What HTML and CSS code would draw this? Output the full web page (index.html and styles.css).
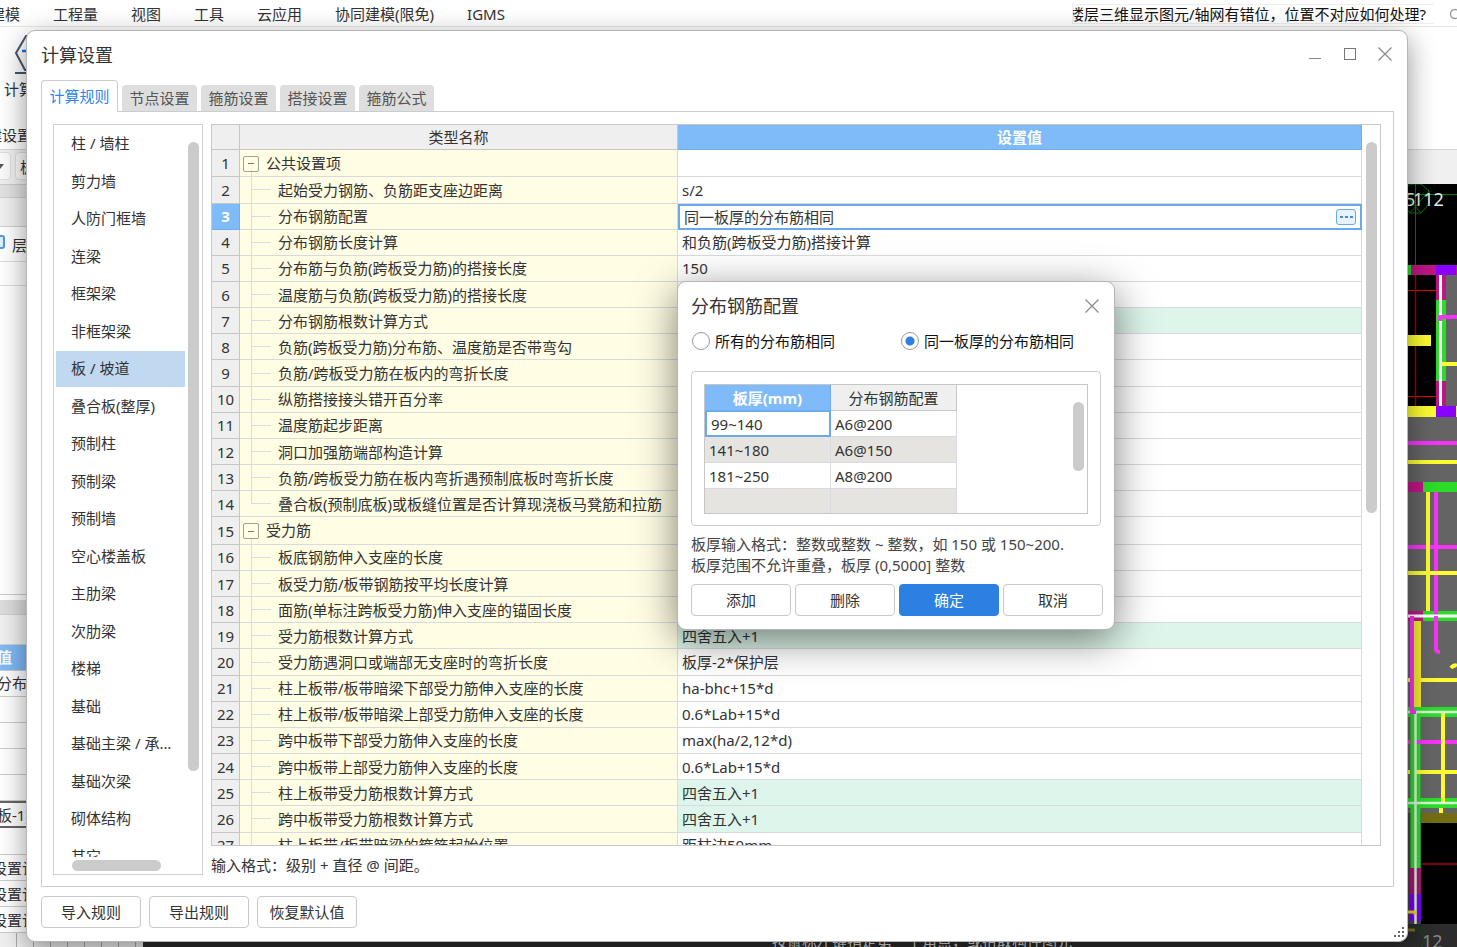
FILE: index.html
```html
<!DOCTYPE html>
<html lang="zh-CN">
<head>
<meta charset="utf-8">
<title>计算设置</title>
<link rel="stylesheet" href="styles.css">
</head>
<body>
<div class="app">
  <header class="menubar">
    <nav class="menu">
      <a href="#">建模</a><a href="#">工程量</a><a href="#">视图</a><a href="#">工具</a><a href="#">云应用</a><a href="#">协同建模(限免)</a><a href="#">IGMS</a>
    </nav>
    <input class="search" type="text" aria-label="搜索" value="楼层三维显示图元/轴网有错位，位置不对应如何处理?">
    <svg class="lens" width="14" height="14" viewBox="0 0 14 14"><circle cx="6" cy="6" r="4.5" fill="none" stroke="#999" stroke-width="1.4"/><path d="M9.5 9.5L13 13" stroke="#999" stroke-width="1.4"/></svg>
  </header>
  <div class="ribbon">
    <svg width="28" height="42" viewBox="0 0 28 42" fill="none"><path d="M26 1H12L2 18l9 17h15" stroke="#4b5568" stroke-width="2"/><path d="M8 16h18" stroke="#1677e8" stroke-width="2.5"/><path d="M1 38h26" stroke="#4b5568" stroke-width="2"/></svg>
    <span class="ribbon-label">计算设置</span>
    <span class="ribbon-group">建设置</span>
  </div>
  <div class="options"><span class="combo combo-arrow"></span><span class="combo">板</span></div>
  <div class="work">
    <aside class="pane">
      <div class="bar bar-dark"></div>
      <div class="bar bar-light"></div>
      <div class="layer"><i></i>层</div>
      <div class="spacer"></div>
      <div class="blank"></div>
      <div class="bar bar-split"></div>
      <div class="bar bar-head"></div>
      <div class="prop prop-head">值</div>
      <div class="prop">分布筋</div><div class="prop"></div><div class="prop"></div><div class="prop"></div><div class="prop"></div>
      <div class="prop prop-name">板-1]</div>
      <div class="prop prop-gap"></div>
      <div class="prop prop-cut">设置计</div><div class="prop prop-cut">设置计</div><div class="prop prop-cut">设置计</div>
      <div class="ticks"></div>
    </aside>
    <div class="canvas">
      <div class="status"><span>按鼠标左键指定第一个角点，或拾取构件图元</span></div>
      <svg class="cad" width="49" height="763" viewBox="0 0 49 763" fill="none">
        <rect width="49" height="763" fill="#000"/>
        <g fill="#646464"><rect x="38" y="91" width="11" height="131"/><rect y="233" width="49" height="396"/></g>
        <rect x="0" y="629" width="13" height="111" fill="#444"/>
        <g stroke="#087a08"><path d="M7.500 0V82M0 10.500H49"/><path d="M2 0L-6 7v13l8 9h11l8-9V7L13 0z"/><path d="M-6 7L13 29M21 7L2 29"/></g>
        <text x="-3" y="22" class="axis">5</text><text x="5" y="22" class="axis">112</text>
        <path d="M0 106.500H28M0 212.500H28" stroke="#f00000"/><path d="M7.500 91V222" stroke="#a00000" stroke-width="1.500"/>
        <g fill="#bd1684"><rect x="3" y="81" width="25" height="10"/><rect x="48" y="81" width="1" height="10"/><rect x="28" y="91" width="10" height="132"/><rect y="298" width="15" height="10"/><rect y="427" width="15" height="10"/></g>
        <g fill="#8a00ff"><rect x="28" y="81" width="20" height="10"/><rect x="28" y="222" width="20" height="11"/></g>
        <g fill="#2bdc28"><rect y="81" width="3" height="10"/><rect x="28" y="116" width="10" height="81"/><rect x="15" y="298" width="34" height="10"/><rect x="15" y="427" width="34" height="10"/></g>
        <g fill="#fbfb30"><rect y="151" width="23" height="11"/><rect y="222" width="28" height="11"/><rect x="48" y="222" width="1" height="11"/></g>
        <path d="M32.500 91V222" stroke="#fff" stroke-width="3"/>
        <path d="M32 137v-4H49M0 259H49M0 363H49M28 308V465q0 3 4 3" stroke="#f832f8" stroke-width="4"/>
        <path d="M33 180H49M0 278H49M0 389H49M20 308V427M0 496H49M43 484q3-4 6-2" stroke="#fbfb30" stroke-width="4"/>
        <path d="M0 432H49" stroke="#fff" stroke-width="3"/>
        <path d="M28 432V465" stroke="#f832f8" stroke-width="4"/>
        <rect x="5" y="437" width="8" height="86" fill="#f0e832"/>
        <path d="M0 528H49M7.500 523V684M0 619H49" stroke="#2bdc28" stroke-width="10"/>
        <path d="M0 558H2M8 560v-2H49" stroke="#f832f8" stroke-width="4"/>
        <path d="M0 588H2M8 588H49M35 528V618M33 624V629" stroke="#fbfb30" stroke-width="4"/>
        <rect x="13" y="629" width="36" height="10" fill="#736e14"/>
        <path d="M13 680H49" stroke="#800000" stroke-width="2"/>
        <rect x="2" y="684" width="11" height="26" fill="#a81678"/><rect x="2" y="710" width="11" height="27" fill="#7a00f0"/>
        <path d="M0 528H49M7.500 528V740M0 619H49" stroke="#d8f5d8" stroke-width="2.500"/>
        <path d="M4 432V528h4" stroke="#f832f8" stroke-width="4"/>
        <path d="M0 728h7v3" stroke="#e8d820" stroke-width="3"/>
        <rect y="740" width="49" height="23" fill="#2c2c2c"/>
        <path d="M8 745l6 3 4 8-5 7" stroke="#0b520b"/><path d="M0 746h7" stroke="#77702a" stroke-width="3"/>
        <text x="14" y="764" class="axis axis-dim">12</text>
      </svg>
    </div>
  </div>
</div>

<section class="window settings" role="dialog" aria-labelledby="settings-title">
  <header class="titlebar">
    <h1 id="settings-title">计算设置</h1>
    <div class="window-buttons">
      <button type="button" aria-label="最小化"><svg width="16" height="16" viewBox="0 0 16 16"><path d="M2 12.500H14" stroke="#888"/></svg></button>
      <button type="button" aria-label="最大化"><svg width="16" height="16" viewBox="0 0 16 16"><rect x="2.500" y="2.500" width="11" height="11" fill="none" stroke="#777"/></svg></button>
      <button type="button" aria-label="关闭"><svg width="16" height="16" viewBox="0 0 16 16"><path d="M1.500 1.500l13 13M14.500 1.500l-13 13" stroke="#888" stroke-width="1.200"/></svg></button>
    </div>
  </header>
  <div class="tabs" role="tablist">
    <button type="button" role="tab" class="tab active" aria-selected="true">计算规则</button>
    <button type="button" role="tab" class="tab">节点设置</button>
    <button type="button" role="tab" class="tab">箍筋设置</button>
    <button type="button" role="tab" class="tab">搭接设置</button>
    <button type="button" role="tab" class="tab">箍筋公式</button>
  </div>
  <div class="panel">
    <nav class="sidebar">
      <div class="list-view">
        <ul class="list">
          <li><a href="#">柱 / 墙柱</a></li><li><a href="#">剪力墙</a></li><li><a href="#">人防门框墙</a></li><li><a href="#">连梁</a></li><li><a href="#">框架梁</a></li><li><a href="#">非框架梁</a></li><li><a href="#" class="selected">板 / 坡道</a></li><li><a href="#">叠合板(整厚)</a></li><li><a href="#">预制柱</a></li><li><a href="#">预制梁</a></li><li><a href="#">预制墙</a></li><li><a href="#">空心楼盖板</a></li><li><a href="#">主肋梁</a></li><li><a href="#">次肋梁</a></li><li><a href="#">楼梯</a></li><li><a href="#">基础</a></li><li><a href="#">基础主梁 / 承台梁</a></li><li><a href="#">基础次梁</a></li><li><a href="#">砌体结构</a></li><li><a href="#">其它</a></li>
        </ul>
      </div>
      <div class="vbar"><i></i></div>
      <div class="hbar"><i></i></div>
    </nav>
    <main class="content">
      <div class="grid-view">
        <table class="rules">
          <colgroup><col class="col-no"><col class="col-name"><col></colgroup>
          <thead><tr><th></th><th>类型名称</th><th class="current">设置值</th></tr></thead>
          <tbody>
            <tr class="group"><th>1</th><td><button type="button" class="fold" aria-label="折叠"></button>公共设置项</td><td></td></tr>
            <tr><th>2</th><td>起始受力钢筋、负筋距支座边距离</td><td>s/2</td></tr>
            <tr class="editing"><th>3</th><td>分布钢筋配置</td><td><div class="editor"><span>同一板厚的分布筋相同</span><button type="button" class="more" aria-label="更多"><i></i><i></i><i></i></button></div></td></tr>
            <tr><th>4</th><td>分布钢筋长度计算</td><td>和负筋(跨板受力筋)搭接计算</td></tr>
            <tr><th>5</th><td>分布筋与负筋(跨板受力筋)的搭接长度</td><td>150</td></tr>
            <tr><th>6</th><td>温度筋与负筋(跨板受力筋)的搭接长度</td><td></td></tr>
            <tr class="mint"><th>7</th><td>分布钢筋根数计算方式</td><td></td></tr>
            <tr><th>8</th><td>负筋(跨板受力筋)分布筋、温度筋是否带弯勾</td><td></td></tr>
            <tr><th>9</th><td>负筋/跨板受力筋在板内的弯折长度</td><td></td></tr>
            <tr><th>10</th><td>纵筋搭接接头错开百分率</td><td></td></tr>
            <tr><th>11</th><td>温度筋起步距离</td><td></td></tr>
            <tr><th>12</th><td>洞口加强筋端部构造计算</td><td></td></tr>
            <tr><th>13</th><td>负筋/跨板受力筋在板内弯折遇预制底板时弯折长度</td><td></td></tr>
            <tr class="last"><th>14</th><td>叠合板(预制底板)或板缝位置是否计算现浇板马凳筋和拉筋</td><td></td></tr>
            <tr class="group"><th>15</th><td><button type="button" class="fold" aria-label="折叠"></button>受力筋</td><td></td></tr>
            <tr><th>16</th><td>板底钢筋伸入支座的长度</td><td></td></tr>
            <tr><th>17</th><td>板受力筋/板带钢筋按平均长度计算</td><td></td></tr>
            <tr><th>18</th><td>面筋(单标注跨板受力筋)伸入支座的锚固长度</td><td></td></tr>
            <tr class="mint"><th>19</th><td>受力筋根数计算方式</td><td>四舍五入+1</td></tr>
            <tr><th>20</th><td>受力筋遇洞口或端部无支座时的弯折长度</td><td>板厚-2*保护层</td></tr>
            <tr><th>21</th><td>柱上板带/板带暗梁下部受力筋伸入支座的长度</td><td>ha-bhc+15*d</td></tr>
            <tr><th>22</th><td>柱上板带/板带暗梁上部受力筋伸入支座的长度</td><td>0.6*Lab+15*d</td></tr>
            <tr><th>23</th><td>跨中板带下部受力筋伸入支座的长度</td><td>max(ha/2,12*d)</td></tr>
            <tr><th>24</th><td>跨中板带上部受力筋伸入支座的长度</td><td>0.6*Lab+15*d</td></tr>
            <tr class="mint"><th>25</th><td>柱上板带受力筋根数计算方式</td><td>四舍五入+1</td></tr>
            <tr class="mint"><th>26</th><td>跨中板带受力筋根数计算方式</td><td>四舍五入+1</td></tr>
            <tr><th>27</th><td>柱上板带/板带暗梁的箍筋起始位置</td><td>距柱边50mm</td></tr>
          </tbody>
        </table>
        <div class="vbar"><i></i></div>
      </div>
      <p class="hint">输入格式：级别 + 直径 @ 间距。</p>
    </main>
  </div>
  <footer class="actions">
    <button type="button" class="btn">导入规则</button>
    <button type="button" class="btn">导出规则</button>
    <button type="button" class="btn">恢复默认值</button>
  </footer>
  <svg class="grip" width="12" height="12" viewBox="0 0 12 12" fill="#666"><path d="M9 0h2v2H9zM5 4h2v2H5zM9 4h2v2H9zM1 8h2v2H1zM5 8h2v2H5zM9 8h2v2H9z"/></svg>
</section>

<section class="window config" role="dialog" aria-labelledby="config-title">
  <header class="config-head">
    <h2 id="config-title">分布钢筋配置</h2>
    <button type="button" aria-label="关闭"><svg width="16" height="16" viewBox="0 0 16 16"><path d="M1.500 1.500l13 13M14.500 1.500l-13 13" stroke="#888" stroke-width="1.200"/></svg></button>
  </header>
  <div class="radios">
    <label><input type="radio" name="scope">所有的分布筋相同</label>
    <label><input type="radio" name="scope" checked>同一板厚的分布筋相同</label>
  </div>
  <div class="frame">
    <div class="thick-view">
      <table class="thick">
        <thead><tr><th class="current">板厚(mm)</th><th>分布钢筋配置</th></tr></thead>
        <tbody>
          <tr><td class="focus">99~140</td><td>A6@200</td></tr>
          <tr><td>141~180</td><td>A6@150</td></tr>
          <tr><td>181~250</td><td>A8@200</td></tr>
          <tr><td></td><td></td></tr>
        </tbody>
      </table>
      <div class="vbar"><i></i></div>
    </div>
  </div>
  <p class="note">板厚输入格式：整数或整数 ~ 整数，如 150 或 150~200.<br>板厚范围不允许重叠，板厚 (0,5000] 整数</p>
  <div class="config-actions">
    <button type="button" class="btn">添加</button>
    <button type="button" class="btn">删除</button>
    <button type="button" class="btn primary">确定</button>
    <button type="button" class="btn">取消</button>
  </div>
</section>
</body>
</html>
```
FILE: styles.css
```css
* { box-sizing: border-box; }
html, body { height: 100%; }
body {
  margin: 0;
  overflow: hidden;
  font: 15px/20px "Noto Sans", "Noto Sans CJK SC", sans-serif;
  color: #333;
  background: #fff;
}
button, input { font: inherit; color: inherit; }
button { padding: 0; border: 0; background: none; }
a { color: inherit; text-decoration: none; }
h1, h2, p, ul { margin: 0; padding: 0; font-weight: 400; }
ul { list-style: none; }
svg { display: block; }

/* Application behind the dialogs */
.app { height: 100%; display: flex; flex-direction: column; overflow: hidden; }
.menubar {
  height: 27px; flex: none;
  display: flex; align-items: center; justify-content: space-between;
  border-bottom: 1px solid #e8e8e8;
  padding-bottom: 2px;
}
.menu { flex: 1; display: flex; gap: 33px; margin-left: -10px; padding-top: 4px; white-space: nowrap; }
.search {
  width: 362px; height: 20px; padding: 0; text-indent: -4px;
  border: 1px solid #eee; border-right: 0; background: #fff; color: #111;
  margin-top: 3px;
}
.lens { margin: 5px -6px 0 15px; }
.ribbon { height: 123px; flex: none; display: flex; flex-direction: column; padding: 8px 0 0 14px; border-bottom: 1px solid #d5d5d5; white-space: nowrap; }
.ribbon-label { margin: 2px 0 0 -10px; }
.ribbon-group { margin: 26px 0 0 -27px; }
.options { height: 34px; flex: none; display: flex; gap: 4px; padding: 2px 0 4px; background: #f0f0f0; margin-left: -20px; }
.combo { width: 31px; border: 1px solid #ddd; border-radius: 4px; background: #fafafa; padding: 4px; overflow: hidden; }
.combo-arrow { display: flex; justify-content: flex-end; align-items: center; }
.combo-arrow::after { content: ""; border: 4px solid transparent; border-top: 5px solid #555; border-bottom: 0; margin-right: 2px; }
.work { flex: 1; min-height: 0; display: flex; }
.pane { width: 143px; flex: none; display: flex; flex-direction: column; overflow: hidden; background: #fff; border-top: 1px solid #ccc; white-space: nowrap; }
.bar { flex: none; border-bottom: 1px solid #d0d0d0; }
.bar-dark { height: 13px; background: #e2e2e2; }
.bar-light { height: 29px; background: #f0f0f0; }
.layer { height: 35px; flex: none; display: flex; align-items: center; gap: 7px; border-bottom: 1px solid #ddd; padding-top: 2px; }
.layer i { width: 12px; height: 14px; margin: 0 0 6px -7px; border: 2px solid #4f98ec; border-radius: 3px; background: #e0eefe; }
.spacer { height: 24px; flex: none; border-bottom: 1px solid #ddd; }
.blank { flex: 1; border-bottom: 1px solid #ccc; }
.bar-split { height: 15px; background: #ddd; margin-top: 5px; }
.bar-head { height: 30px; background: #f0f0f0; }
.prop { height: 26px; flex: none; border-bottom: 1px solid #ccc; line-height: 24px; margin-left: -4px; padding-left: 1px; }
.prop-head { background: #7fbaf9; color: #fff; font-weight: 700; }
.prop-name { height: 27px; border-top: 2px solid #666; border-bottom: 2px solid #666; }
.prop-gap { height: 27px; }
.prop-cut { margin-left: -9px; line-height: 26px; }
.ticks { height: 14px; flex: none; background: repeating-linear-gradient(90deg, #f0f0f0 0 16px, #aaa 16px 17px); }
.canvas { flex: 1; position: relative; background: #000; display: flex; justify-content: space-between; align-items: flex-end; }
.status { flex: 1; height: 23px; background: #2c2c2c; padding-left: 629px; line-height: 34px; color: #ddd; white-space: nowrap; overflow: hidden; }
.cad { flex: none; align-self: flex-start; }
.axis { font: 18px "Noto Sans", sans-serif; fill: #e8e8e8; }
.axis-dim { fill: #888; }

/* Windows */
.window { position: absolute; background: #fff; border: 1px solid #b5b5b5; border-radius: 9px; }
.settings {
  top: 30px; right: 49px; bottom: 5px; left: 26px;
  display: flex; flex-direction: column;
  padding: 0 13px 13px 14px;
  box-shadow: 0 8px 28px rgba(0, 0, 0, .42);
}
.titlebar { height: 49px; flex: none; display: flex; align-items: center; justify-content: space-between; padding: 0 1px 2px 0; }
h1, h2 { font-size: 18px; line-height: 24px; }
.window-buttons { display: flex; gap: 19px; padding-bottom: 2px; }
.window-buttons button { width: 16px; height: 16px; }
.tabs { position: relative; height: 32px; flex: none; display: flex; align-items: flex-end; gap: 4px; margin-bottom: -1px; }
.tab { width: 75px; height: 26px; margin-bottom: 1px; border-radius: 4px 4px 0 0; background: #dedede; color: #555; }
.tab.active { width: 77px; height: 32px; margin: 0; padding-bottom: 1px; background: #fff; border: 1px solid #c9cdd2; border-bottom: 0; color: #2f86e8; }
.panel { flex: 1; min-height: 0; display: flex; gap: 8px; padding: 12px 12px 11px 11px; border: 1px solid #c9cdd2; }
.sidebar {
  width: 150px; flex: none; display: grid;
  grid-template-columns: 1fr 17px; grid-template-rows: minmax(0, 1fr) 17px;
  border: 1px solid #d0d0d0; padding-left: 2px;
}
.list-view { overflow: hidden; }
.list { height: 750px; display: grid; grid-auto-rows: 1fr; }
.list li { display: flex; padding: 1px 0; min-width: 0; }
.list a { flex: 1; min-width: 0; line-height: 35px; padding: 0 6px 0 15px; white-space: nowrap; overflow: hidden; text-overflow: ellipsis; }
.list .selected { background: #c1d8f1; }
.vbar i, .hbar i { display: block; background: #cbcbcb; border-radius: 6px; }
.vbar i { width: 11px; margin: 17px auto 0; }
.sidebar .vbar i { height: 629px; }
.hbar i { width: 89px; height: 11px; margin: 3px 0 0 16px; }

.content { flex: 1; min-width: 0; display: flex; flex-direction: column; }
.grid-view { flex: 1; min-height: 0; display: flex; overflow: hidden; border: 1px solid #c8c8c8; }
.grid-view .vbar { width: 18px; flex: none; }
.grid-view .vbar i { height: 371px; }
.rules { flex: 1; height: 734px; table-layout: fixed; border-collapse: separate; border-spacing: 0; }
.col-no { width: 28px; }
.col-name { width: 438px; }
th, td { padding: 0; border-right: 1px solid #d8dade; border-bottom: 1px solid #d8dade; white-space: nowrap; overflow: hidden; line-height: 20px; }
th { font-weight: 400; background: #efefef; border-color: #c6c6c6; text-align: center; }
th.current, .editing th { background: #7fbaf9; border-color: #6eaeef; color: #fff; font-weight: 700; }
.rules thead tr { height: 25px; }
.rules td { padding-left: 4px; }
.rules td:nth-child(2) {
  padding-left: 38px;
  background:
    linear-gradient(#dcdde2, #dcdde2) 11px 50% / 20px 1px no-repeat,
    linear-gradient(#dcdde2, #dcdde2) 11px 0 / 1px 100% no-repeat,
    #fffde3;
}
.rules .last td:nth-child(2) { background-size: 20px 1px, 1px 50%; }
.rules .group td:nth-child(2) {
  padding-left: 3px;
  background: linear-gradient(#dcdde2, #dcdde2) 11px 100% / 1px 6px no-repeat, #fffde3;
}
.fold { width: 16px; height: 16px; margin: 0 7px 2px 0; border: 1px solid #a3a38f; border-radius: 2px; vertical-align: middle; background: linear-gradient(#777, #777) center / 6px 1px no-repeat; }
.mint td:nth-child(3) { background: #ddf5ea; }
.rules .editing td:nth-child(3) { padding: 0; border: 2px solid #69a9ec; }
.editor { height: 17px; display: flex; align-items: center; justify-content: space-between; padding: 0 4px; }
.more { width: 20px; height: 16px; display: flex; gap: 2px; align-items: center; justify-content: center; border: 1px solid #69a9ec; border-radius: 3px; background: #e8f2fd; }
.more i { width: 3px; height: 2px; background: #3f8ce0; }
.hint { height: 29px; flex: none; line-height: 38px; }
.actions { display: flex; gap: 8px; margin-top: 9px; }
.btn { width: 100px; height: 32px; border: 1px solid #c9c9c9; border-radius: 4px; background: #fff; }
.grip { position: absolute; right: 2px; bottom: 2px; }

/* Distribution bar dialog */
.config { left: 677px; top: 281px; width: 438px; padding: 0 11px 13px 13px; box-shadow: 0 10px 40px rgba(0, 0, 0, .5); }
.config-head { height: 47px; display: flex; align-items: center; justify-content: space-between; padding-right: 3px; }
.radios { display: grid; grid-template-columns: 209px 1fr; height: 24px; color: #111; }
.radios label { display: flex; align-items: center; gap: 5px; white-space: nowrap; }
.radios input { appearance: none; width: 18px; height: 18px; margin: 0 0 0 1px; border: 1px solid #999; border-radius: 50%; }
.radios input:checked { background: radial-gradient(circle, #2b80e2 0 4px, #fff 5px); }
.frame { margin: 18px 2px 0 0; padding: 12px; border: 1px solid #ccc; border-radius: 4px; height: 155px; }
.thick-view { height: 130px; display: flex; justify-content: space-between; border: 1px solid #c6c6c6; overflow: hidden; }
.thick { width: 252px; align-self: flex-start; table-layout: fixed; border-collapse: separate; border-spacing: 0; }
.thick tr { height: 26px; }
.thick td { padding-left: 4px; }
.thick tbody tr:nth-child(even) { background: #e6e4e0; }
.thick .focus { border: 2px solid #69a9ec; border-top-width: 1px; }
.thick-view .vbar { width: 18px; }
.thick-view .vbar i { height: 69px; }
.note { margin-top: 8px; line-height: 21px; white-space: nowrap; color: #444; }
.config-actions { display: flex; gap: 4px; margin-top: 8px; }
.primary { background: #2b80e2; border-color: #2b80e2; color: #fff; }
```
